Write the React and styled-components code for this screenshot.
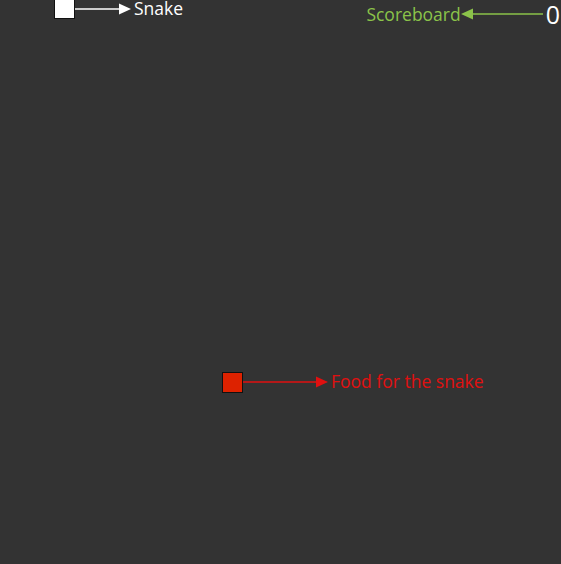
import React from "react";
import styled, { createGlobalStyle } from "styled-components";

const GlobalStyle = createGlobalStyle`
  html, body {
    margin: 0;
    padding: 0;
    background: #333333;
  }
`;

function App() {
  return (
    <>
      <GlobalStyle />
      <Board>
        <SnakeCell />
        <Pointer style={{ left: 75, top: 0 }}>
          <Arrow width={56} color="#ffffff" />
          <Label color="#ffffff" size={17.5}>Snake</Label>
        </Pointer>

        <ScoreGroup>
          <Label color="#8bc34a" size={17.5}>Scoreboard</Label>
          <Arrow width={82} color="#8bc34a" reverse />
          <Score>0</Score>
        </ScoreGroup>

        <FoodCell />
        <Pointer style={{ left: 243, top: 373 }}>
          <Arrow width={85} color="#e01010" />
          <Label color="#e01010" size={17.5}>Food for the snake</Label>
        </Pointer>
      </Board>
    </>
  );
}

function Arrow({ width, color, reverse }) {
  return (
    <svg width={width} height="14" viewBox={`0 0 ${width} 14`}>
      {reverse ? (
        <>
          <line x1="10" y1="7" x2={width} y2="7" stroke={color} strokeWidth="1.5" />
          <polygon points={`0,7 12,1.5 12,12.5`} fill={color} />
        </>
      ) : (
        <>
          <line x1="0" y1="7" x2={width - 10} y2="7" stroke={color} strokeWidth="1.5" />
          <polygon points={`${width},7 ${width - 12},1.5 ${width - 12},12.5`} fill={color} />
        </>
      )}
    </svg>
  );
}

const Board = styled.div`
  position: relative;
  width: 561px;
  height: 564px;
  background: #333333;
  overflow: hidden;
  font-family: "Open Sans", "Noto Sans", sans-serif;
`;

const SnakeCell = styled.div`
  position: absolute;
  left: 54px;
  top: -2px;
  width: 19px;
  height: 19px;
  background: #ffffff;
  border: 1px solid #111111;
`;

const FoodCell = styled.div`
  position: absolute;
  left: 222px;
  top: 372px;
  width: 19px;
  height: 19px;
  background: #dd2200;
  border: 1px solid #111111;
`;

const Pointer = styled.div`
  position: absolute;
  display: flex;
  align-items: center;
  gap: 3px;
  height: 17px;
`;

const Label = styled.span`
  color: ${(p) => p.color};
  font-size: ${(p) => p.size}px;
  line-height: 17px;
  white-space: nowrap;
`;

const ScoreGroup = styled.div`
  position: absolute;
  right: 1px;
  top: 2px;
  display: flex;
  align-items: center;
`;

const Score = styled.span`
  color: #ffffff;
  font-size: 25px;
  line-height: 24px;
  margin-left: 3px;
`;

export default App;
